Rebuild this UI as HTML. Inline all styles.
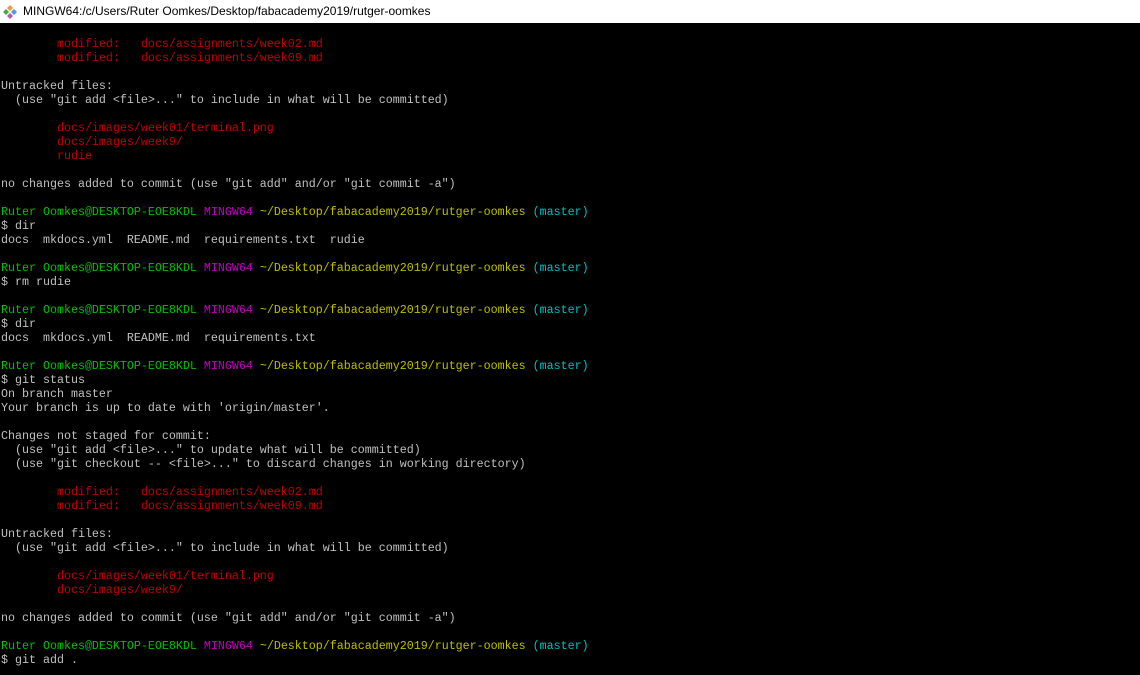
<!DOCTYPE html>
<html><head><meta charset="utf-8"><style>
html,body{margin:0;padding:0;width:1140px;height:675px;overflow:hidden;background:#000}
.title{position:absolute;left:0;top:0;width:1140px;height:23px;background:#fff;font-family:"Liberation Sans",sans-serif;font-size:12px;color:#000;line-height:23px}
.title span{position:absolute;left:23px;top:0}
.icon{position:absolute;left:3px;top:5px;width:14px;height:14px}
pre{position:absolute;left:1px;top:37px;margin:0;font-family:"Liberation Mono",monospace;font-size:11.67px;line-height:14px;color:#c0c0c0}
.r{color:#bf0000}.g{color:#00bf00}.m{color:#bf00bf}.y{color:#bfbf00}.c{color:#00bfbf}
</style></head><body>
<div class="title"><svg class="icon" viewBox="0 0 14 14"><path d="M7 0L10 3L7 6L4 3Z" fill="#e94"/><path d="M3 4L6 7L3 10L0 7Z" fill="#4a4"/><path d="M11 4L14 7L11 10L8 7Z" fill="#59d"/><path d="M7 8L10 11L7 14L4 11Z" fill="#b5b"/></svg><span>MINGW64:/c/Users/Ruter Oomkes/Desktop/fabacademy2019/rutger-oomkes</span></div>
<pre><span class="r">        modified:   docs/assignments/week02.md
        modified:   docs/assignments/week09.md</span>

Untracked files:
  (use "git add &lt;file&gt;..." to include in what will be committed)

<span class="r">        docs/images/week01/terminal.png
        docs/images/week9/
        rudie</span>

no changes added to commit (use "git add" and/or "git commit -a")

<span class="g">Ruter Oomkes@DESKTOP-EOE8KDL</span> <span class="m">MINGW64</span> <span class="y">~/Desktop/fabacademy2019/rutger-oomkes</span> <span class="c">(master)</span>
$ dir
docs  mkdocs.yml  README.md  requirements.txt  rudie

<span class="g">Ruter Oomkes@DESKTOP-EOE8KDL</span> <span class="m">MINGW64</span> <span class="y">~/Desktop/fabacademy2019/rutger-oomkes</span> <span class="c">(master)</span>
$ rm rudie

<span class="g">Ruter Oomkes@DESKTOP-EOE8KDL</span> <span class="m">MINGW64</span> <span class="y">~/Desktop/fabacademy2019/rutger-oomkes</span> <span class="c">(master)</span>
$ dir
docs  mkdocs.yml  README.md  requirements.txt

<span class="g">Ruter Oomkes@DESKTOP-EOE8KDL</span> <span class="m">MINGW64</span> <span class="y">~/Desktop/fabacademy2019/rutger-oomkes</span> <span class="c">(master)</span>
$ git status
On branch master
Your branch is up to date with 'origin/master'.

Changes not staged for commit:
  (use "git add &lt;file&gt;..." to update what will be committed)
  (use "git checkout -- &lt;file&gt;..." to discard changes in working directory)

<span class="r">        modified:   docs/assignments/week02.md
        modified:   docs/assignments/week09.md</span>

Untracked files:
  (use "git add &lt;file&gt;..." to include in what will be committed)

<span class="r">        docs/images/week01/terminal.png
        docs/images/week9/</span>

no changes added to commit (use "git add" and/or "git commit -a")

<span class="g">Ruter Oomkes@DESKTOP-EOE8KDL</span> <span class="m">MINGW64</span> <span class="y">~/Desktop/fabacademy2019/rutger-oomkes</span> <span class="c">(master)</span>
$ git add .
</pre>
</body></html>
